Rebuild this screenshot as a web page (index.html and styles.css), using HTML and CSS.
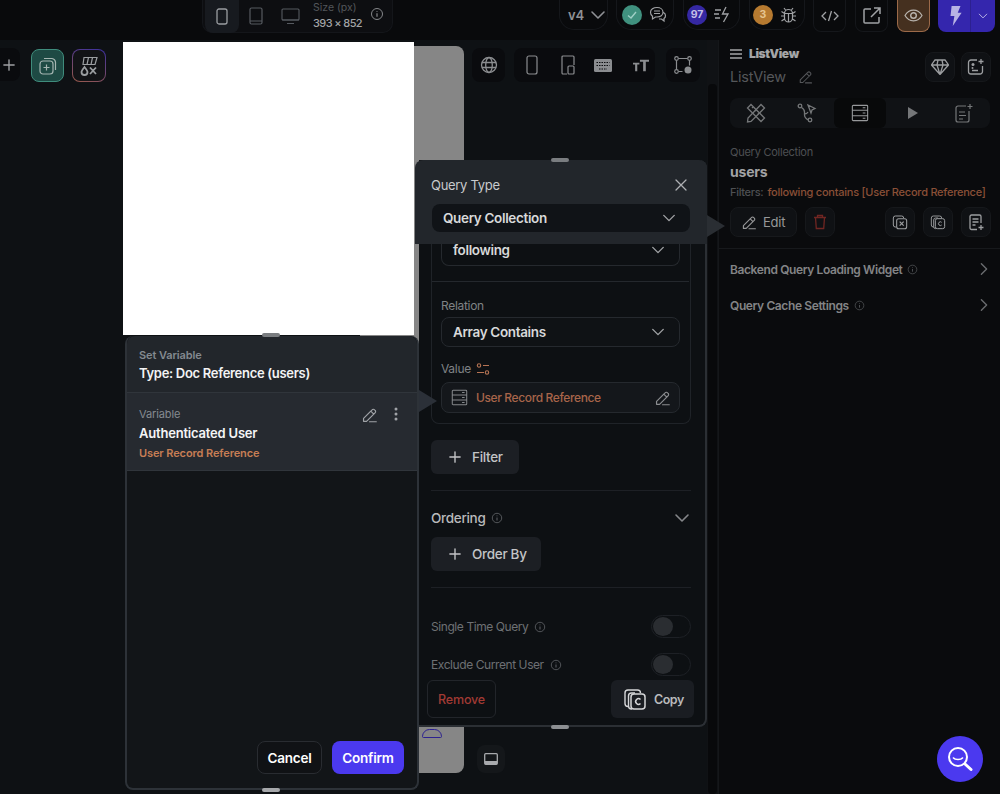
FILE: index.html
```html
<!DOCTYPE html>
<html lang="en">
<head>
<meta charset="utf-8">
<title>ListView Query</title>
<link rel="stylesheet" href="styles.css">
</head>
<body>
<svg class="defs" aria-hidden="true">
  <symbol id="pencil" viewBox="0 0 20 20"><path d="M3 14.500 13 4.500a2 2 0 0 1 3 0l.5.5a2 2 0 0 1 0 3L6.500 18H3v-3.500ZM11.500 6l3.500 3.500M10 18.500h8" fill="none" stroke="currentColor" stroke-width="1.400" stroke-linecap="round" stroke-linejoin="round"/></symbol>
  <symbol id="chev" viewBox="0 0 16 16"><path d="M2 5l6 6 6-6" fill="none" stroke="currentColor" stroke-width="1.600" stroke-linecap="round" stroke-linejoin="round"/></symbol>
  <symbol id="info" viewBox="0 0 14 14"><circle cx="7" cy="7" r="5.500" fill="none" stroke="currentColor"/><path d="M7 6.300v3.500M7 4.200v.8" stroke="currentColor" stroke-width="1.200"/></symbol>
  <symbol id="plus" viewBox="0 0 14 14"><path d="M7 1v12M1 7h12" stroke="currentColor" stroke-width="1.600" stroke-linecap="round"/></symbol>
  <symbol id="db" viewBox="0 0 20 20"><path d="M2.500 1.500h15a1 1 0 0 1 1 1v15a1 1 0 0 1-1 1h-15a1 1 0 0 1-1-1v-15a1 1 0 0 1 1-1ZM1.500 7h17M1.500 13h17M13 4.200h3M13 10h3M13 15.800h3" fill="none" stroke="currentColor" stroke-width="1.200"/></symbol>
  <symbol id="copyc" viewBox="0 0 24 24"><path d="M6 19.500H5a3 3 0 0 1-3-3V6a3 3 0 0 1 3-3h9.500a3 3 0 0 1 3 3M9 22H8.500a3 3 0 0 1-3-3V9a3 3 0 0 1 3-3H12" fill="none" stroke="currentColor" stroke-width="1.400"/><rect x="8" y="7" width="14" height="15" rx="3" fill="none" stroke="currentColor" stroke-width="1.500"/><path d="M17.500 12.500a2.800 2.800 0 1 0 0 4" fill="none" stroke="currentColor" stroke-width="1.500"/></symbol>
</svg>

<header class="topbar">
  <div class="device-group">
    <span class="device active"><svg width="12" height="17" viewBox="0 0 12 17"><rect x="1" y="1" width="10" height="15" rx="2" fill="none" stroke="currentColor" stroke-width="1.300"/></svg></span>
    <span class="device"><svg width="14" height="18" viewBox="0 0 14 18"><rect x="1" y="1" width="12" height="16" rx="1.500" fill="none" stroke="currentColor" stroke-width="1.200"/><path d="M1 14h12" stroke="currentColor"/></svg></span>
    <span class="device"><svg width="19" height="17" viewBox="0 0 19 17"><rect x="1" y="1" width="17" height="11" rx="1" fill="none" stroke="currentColor" stroke-width="1.100"/><path d="M1 12h17M6 15.500h7" stroke="currentColor" stroke-width="1.200"/></svg></span>
    <div class="size-read">
      <span class="size-label">Size (px)</span>
      <span class="size-value">393 × 852</span>
    </div>
    <svg class="size-info" width="14" height="14"><use href="#info"/></svg>
  </div>
  <div class="actions">
    <div class="pill pill-v"><span>v4</span><svg width="16" height="16"><use href="#chev"/></svg></div>
    <div class="pill pill-check">
      <span class="dot dot-teal"><svg width="12" height="12" viewBox="0 0 12 12"><path d="M2 6.500 5 9l5-6" fill="none" stroke="currentColor" stroke-width="1.400"/></svg></span>
      <svg width="18" height="17" viewBox="0 0 18 17"><path d="M8 1.500c3.500 0 6 2 6 4.800s-2.500 4.700-6 4.700H6.500L3.500 13v-2.800C2 9.300 1.500 7.800 1.500 6.300 1.500 3.500 4.500 1.500 8 1.500ZM5 5h6M5 7.500h6M14.500 6.500c1.500.8 2 2 2 3.200 0 1.200-.5 2.200-1.500 2.900v2.400L12.500 13H10" fill="none" stroke="currentColor" stroke-width="1.200"/></svg>
    </div>
    <div class="pill pill-score">
      <span class="dot dot-purple">97</span>
      <svg width="18" height="17" viewBox="0 0 18 17"><path d="M12 1 8.500 8H14l-4.500 8M1 4h6M0 8h5M1 12h5" fill="none" stroke="currentColor" stroke-width="1.300"/></svg>
    </div>
    <div class="pill pill-bugs">
      <span class="dot dot-amber">3</span>
      <svg width="17" height="18" viewBox="0 0 17 18"><path d="M4.500 7.500a4 4 0 0 1 8 0V12a4 4 0 0 1-8 0ZM8.500 7v9M4.500 7.500h8M5.500 4 4 2M11.500 4 13 2M4.500 10H1M12.500 10H16M4.500 13l-3 2M12.500 13l3 2M4.500 7.500l-3-2M12.500 7.500l3-2" fill="none" stroke="currentColor" stroke-width="1.200"/></svg>
    </div>
    <span class="square"><svg width="18" height="12" viewBox="0 0 18 12"><path d="M5 2 1 6l4 4M13 2l4 4-4 4M10.500 1l-3 10" fill="none" stroke="currentColor" stroke-width="1.300"/></svg></span>
    <span class="square square-push"><svg width="18" height="18" viewBox="0 0 18 18"><path d="M8 2H2a1 1 0 0 0-1 1v12a1 1 0 0 0 1 1h13a1 1 0 0 0 1-1V10M8 10l9-9M11 1h6v6" fill="none" stroke="currentColor" stroke-width="1.500"/></svg></span>
    <span class="square square-eye square-push"><svg width="19" height="13" viewBox="0 0 19 13"><path d="M1 6.500C3 3 6 1.200 9.500 1.200S16 3 18 6.500c-2 3.500-5 5.300-8.500 5.300S3 10 1 6.500Z" fill="none" stroke="currentColor" stroke-width="1.200"/><circle cx="9.500" cy="6.500" r="2.800" fill="none" stroke="currentColor" stroke-width="1.400"/></svg></span>
    <div class="run">
      <span class="run-main"><svg width="13" height="20" viewBox="0 0 11 18"><path d="M2 0h8L7.500 6H11L3 18l1.500-9H1Z" fill="currentColor"/></svg></span>
      <span class="run-more"><svg width="10" height="10"><use href="#chev"/></svg></span>
    </div>
  </div>
</header>

<div class="workspace">
  <main class="canvas">
    <div class="float-btn add-btn"><svg width="12" height="12"><use href="#plus"/></svg></div>
    <div class="float-btn teal-btn"><svg width="18" height="18" viewBox="0 0 18 18"><rect x="1" y="4" width="13" height="13" rx="3" fill="none" stroke="currentColor" stroke-width="1.200"/><path d="M5 1.500h8a4 4 0 0 1 3.500 3.500v8M7.500 7.500v6M4.500 10.500h6" fill="none" stroke="currentColor" stroke-width="1.200"/></svg></div>
    <div class="float-btn var-btn"><svg width="18" height="20" viewBox="0 0 18 20"><path d="M4 1.500h13l-2 7H3ZM8.500 1.500l-1.500 7M12.500 1.500 11 8.500" fill="none" stroke="currentColor" stroke-width="1.200"/><path d="M4.500 11c-1.800 2.300-3 3.800-3 5a3 3 0 0 0 6 0c0-1.200-1.200-2.700-3-5ZM10 11.500l6 6.500M16 11.500 10 18" fill="none" stroke="currentColor" stroke-width="1.800"/></svg></div>

    <div class="phone-shell"><span class="notch"></span></div>
    <div class="phone-screen"></div>

    <div class="tool-tile tile-globe"><svg width="18" height="18" viewBox="0 0 18 18"><g fill="none" stroke="currentColor" stroke-width="1.300"><circle cx="9" cy="9" r="7.500"/><ellipse cx="9" cy="9" rx="3.300" ry="7.500"/><path d="M2 6.500h14M2 11.500h14"/></g></svg></div>
    <div class="tool-tile tile-views">
      <svg width="12" height="20" viewBox="0 0 12 20"><rect x="1" y="1" width="10" height="18" rx="2" fill="none" stroke="currentColor" stroke-width="1.200"/></svg>
      <svg class="view-tablet" width="14" height="20" viewBox="0 0 14 20"><path d="M6 19H2a1 1 0 0 1-1-1V2a1 1 0 0 1 1-1h10a1 1 0 0 1 1 1v8" fill="none" stroke="currentColor" stroke-width="1.200"/><rect x="7" y="11" width="6" height="8" rx="1" fill="none" stroke="currentColor" stroke-width="1.200"/></svg>
      <svg class="view-keys" width="18" height="13" viewBox="0 0 18 13"><rect width="18" height="13" rx="1.500" fill="currentColor"/><path d="M2.500 3.500h13M2.500 6.500h13M5 10h8" stroke="#0b0c0f" stroke-width="1.200" stroke-dasharray="1.500 1"/></svg>
      <svg width="16" height="13" viewBox="0 0 15 11"><path d="M0 3h6v1.500H4V11H2V4.500H0ZM6.500 0H15v2h-3v9H9.500V2h-3Z" fill="currentColor"/></svg>
    </div>
    <div class="tool-tile tile-flow"><svg width="18" height="18" viewBox="0 0 18 18"><g fill="none" stroke="currentColor" stroke-width="1.200"><circle cx="2.500" cy="2.500" r="1.800"/><circle cx="15.500" cy="2.500" r="1.800"/><circle cx="2.500" cy="15.500" r="1.800"/><path d="M4.500 2.500h9M2.500 4.500v9M15.500 4.500v5M4.500 15.500h4"/></g><circle cx="14" cy="14" r="3.500" fill="currentColor"/></svg></div>
    <div class="tool-tile tile-dock"><svg width="14" height="12" viewBox="0 0 14 12"><rect x=".7" y=".7" width="12.600" height="10.600" rx="1" fill="none" stroke="currentColor" stroke-width="1.300"/><rect x="1" y="8" width="12" height="3" fill="currentColor"/></svg></div>

    <section class="query-panel">
      <span class="handle handle-top"></span>
      <span class="handle handle-bottom"></span>
      <div class="query-head">
        <span class="pointer pointer-query"></span>
        <div class="query-title">
          <span>Query Type</span>
          <svg width="14" height="14" viewBox="0 0 14 14"><path d="M2 2l10 10M12 2 2 12" stroke="currentColor" stroke-width="1.300" stroke-linecap="round"/></svg>
        </div>
        <div class="select select-dark"><span>Query Collection</span><svg width="14" height="14"><use href="#chev"/></svg></div>
      </div>
      <div class="query-body">
        <div class="filter-card">
          <div class="select select-cut"><span>following</span><svg width="14" height="14"><use href="#chev"/></svg></div>
          <div class="filter-rule"></div>
          <label class="field-label">Relation</label>
          <div class="select select-line"><span>Array Contains</span><svg width="14" height="14"><use href="#chev"/></svg></div>
          <div class="field-label value-label">Value
            <svg width="14" height="14" viewBox="0 0 14 14"><g fill="none" stroke="currentColor" stroke-width="1.100"><circle cx="3" cy="3.500" r="1.700"/><circle cx="11" cy="10.500" r="1.700"/><path d="M7 3.500h6M1 10.500h7"/></g></svg>
          </div>
          <div class="value-field">
            <svg class="value-db" width="17" height="17"><use href="#db"/></svg>
            <span class="value-text">User Record Reference</span>
            <svg class="value-pen" width="17" height="17"><use href="#pencil"/></svg>
          </div>
        </div>
        <button class="ghost filter-btn"><svg width="12" height="12"><use href="#plus"/></svg>Filter</button>
        <div class="rule rule-a"></div>
        <div class="order-row">
          <span class="order-title">Ordering</span>
          <svg class="info-ic" width="12" height="12"><use href="#info"/></svg>
          <svg class="order-chev" width="16" height="16"><use href="#chev"/></svg>
        </div>
        <button class="ghost order-btn"><svg width="12" height="12"><use href="#plus"/></svg>Order By</button>
        <div class="rule rule-b"></div>
        <div class="toggle-row toggle-first"><span>Single Time Query</span><svg class="info-ic" width="12" height="12"><use href="#info"/></svg><span class="toggle"><i></i></span></div>
        <div class="toggle-row toggle-second"><span>Exclude Current User</span><svg class="info-ic" width="12" height="12"><use href="#info"/></svg><span class="toggle"><i></i></span></div>
      </div>
      <div class="query-foot">
        <button class="remove">Remove</button>
        <button class="copy"><svg width="24" height="24"><use href="#copyc"/></svg>Copy</button>
      </div>
    </section>

    <section class="var-panel">
      <span class="handle handle-vtop"></span>
      <span class="handle handle-vbottom"></span>
      <span class="pointer pointer-var"></span>
      <div class="var-head">
        <span class="var-kicker">Set Variable</span>
        <strong class="var-type">Type: Doc Reference (users)</strong>
      </div>
      <div class="var-row">
        <div class="var-row-top">
          <span class="var-small">Variable</span>
          <svg class="var-pen" width="17" height="17"><use href="#pencil"/></svg>
          <svg class="var-dots" width="4" height="14" viewBox="0 0 4 14"><circle cx="2" cy="2" r="1.500" fill="currentColor"/><circle cx="2" cy="7" r="1.500" fill="currentColor"/><circle cx="2" cy="12" r="1.500" fill="currentColor"/></svg>
        </div>
        <strong class="var-name">Authenticated User</strong>
        <span class="var-ref">User Record Reference</span>
      </div>
      <div class="var-spacer"></div>
      <div class="var-foot">
        <button class="cancel">Cancel</button>
        <button class="confirm">Confirm</button>
      </div>
    </section>
  </main>

  <div class="gutter"><span class="thumb"></span></div>

  <aside class="props">
    <div class="props-head">
      <div class="props-names">
        <div class="props-crumb"><svg width="12" height="10" viewBox="0 0 12 10"><path d="M0 1h12M0 5h12M0 9h12" stroke="currentColor" stroke-width="1.500"/></svg><strong>ListView</strong></div>
        <div class="props-name"><span>ListView</span><svg width="15" height="15"><use href="#pencil"/></svg></div>
      </div>
      <span class="p-square"><svg width="18" height="16" viewBox="0 0 18 16"><path d="M4 1h10l3.500 5L9 15.500.5 6ZM.5 6h17M6 6l3 9.500L12 6M6 6l1-5M12 6l-1-5" fill="none" stroke="currentColor" stroke-width="1.300"/></svg></span>
      <span class="p-square"><svg width="18" height="18" viewBox="0 0 18 18"><path d="M10 2H4a2.500 2.500 0 0 0-2.500 2.500v9A2.500 2.500 0 0 0 4 16h9a2.500 2.500 0 0 0 2.500-2.500V8M14 1v5M11.500 3.500h5M5 12.500h6" fill="none" stroke="currentColor" stroke-width="1.300"/><circle cx="6" cy="6.500" r="1.500" fill="currentColor"/><circle cx="5.500" cy="10" r="1" fill="currentColor"/></svg></span>
    </div>
    <nav class="tabs">
      <span class="tab"><svg width="20" height="20" viewBox="0 0 20 20"><g fill="none" stroke="currentColor" stroke-width="1.300"><path d="M5 1.500 18.500 15l-3.500 3.500L1.500 5ZM6 5l1.500-1.500M9 8l1.500-1.500M12 11l1.500-1.500"/><path d="M15 1.500 18.500 5 5 18.500l-3.500.5.500-4Z"/></g></svg></span>
      <span class="tab"><svg width="20" height="20" viewBox="0 0 20 20"><g fill="none" stroke="currentColor" stroke-width="1.300"><circle cx="3" cy="3" r="1.800"/><circle cx="13" cy="17" r="1.800"/><path d="M4.500 4.500C7 6 7.500 7 7.500 9v3c0 2 2 4 4 5M7.500 11c2 0 3-1 3.500-2M11 2l7 3.500-3 1.500-1 3Z"/></g></svg></span>
      <span class="tab tab-active"><svg width="18" height="18"><use href="#db"/></svg></span>
      <span class="tab"><svg width="10" height="12" viewBox="0 0 10 12"><path d="M0 0l10 6-10 6Z" fill="currentColor"/></svg></span>
      <span class="tab"><svg width="18" height="20" viewBox="0 0 18 20"><path d="M11 3H3a2 2 0 0 0-2 2v12a2 2 0 0 0 2 2h9a2 2 0 0 0 2-2V8M15 1v5M12.500 3.500h5M4 9h6M4 12.500h7M4 16h4" fill="none" stroke="currentColor" stroke-width="1.200"/></svg></span>
    </nav>
    <div class="query-summary">
      <span class="sum-label">Query Collection</span>
      <strong class="sum-name">users</strong>
      <div class="sum-filter"><span>Filters:</span><em>following contains [User Record Reference]</em></div>
    </div>
    <div class="sum-actions">
      <button class="edit"><svg width="16" height="16"><use href="#pencil"/></svg>Edit</button>
      <span class="p-square small trash"><svg width="14" height="16" viewBox="0 0 14 16"><path d="M1 3.500h12M4.500 3.500V1.500h5v2M2.500 3.500l.8 11h7.400l.8-11" fill="none" stroke="currentColor" stroke-width="1.300"/></svg></span>
      <span class="sum-spring"></span>
      <span class="p-square small"><svg width="16" height="16" viewBox="0 0 24 24"><path d="M6 19.500H5a3 3 0 0 1-3-3V6a3 3 0 0 1 3-3h9.500a3 3 0 0 1 3 3" fill="none" stroke="currentColor" stroke-width="1.500"/><rect x="7" y="7" width="15" height="15" rx="3" fill="none" stroke="currentColor" stroke-width="1.600"/><path d="m11.500 11.500 6 6M17.500 11.500l-6 6" stroke="currentColor" stroke-width="1.800"/></svg></span>
      <span class="p-square small"><svg width="16" height="16"><use href="#copyc"/></svg></span>
      <span class="p-square small"><svg width="15" height="17" viewBox="0 0 15 17"><path d="M8 15.500H2.500a1.500 1.500 0 0 1-1.500-1.500V2.500A1.500 1.500 0 0 1 2.500 1h8A1.500 1.500 0 0 1 12 2.500V9M3.500 5h6M3.500 8h6M3.500 11h3M12 11v5M9.500 13.500h5" fill="none" stroke="currentColor" stroke-width="1.300"/></svg></span>
    </div>
    <div class="props-rule"></div>
    <div class="prop-row"><span>Backend Query Loading Widget</span><svg width="11" height="11"><use href="#info"/></svg><svg class="prop-chev" width="14" height="14"><use href="#chev"/></svg></div>
    <div class="prop-row"><span>Query Cache Settings</span><svg width="11" height="11"><use href="#info"/></svg><svg class="prop-chev" width="14" height="14"><use href="#chev"/></svg></div>
  </aside>
</div>

<button class="search-fab" aria-label="Search"><svg width="28" height="28" viewBox="0 0 28 28"><g fill="none" stroke="#fff" stroke-linecap="round"><circle cx="12" cy="12" r="9" stroke-width="2"/><path d="M7.500 13c1.500 2 7.500 2 9 0" stroke-width="1.600"/><path d="m19 19 6 5.500" stroke-width="3"/></g></svg></button>
</body>
</html>
```

FILE: styles.css
```css
* { box-sizing: border-box; }
html, body { margin: 0; height: 100%; }
body {
  width: 1000px;
  height: 794px;
  overflow: hidden;
  position: relative;
  background: #0e1114;
  color: #fff;
  font-family: "Inter", "Liberation Sans", sans-serif;
  font-size: 13px;
  letter-spacing: -0.2px;
}
button { font: inherit; letter-spacing: inherit; border: 0; padding: 0; color: inherit; background: none; }
svg { display: block; flex: none; }
.defs { position: absolute; width: 0; height: 0; }

/* top bar */
.topbar {
  height: 40px;
  display: flex;
  align-items: flex-start;
  padding: 0 5px 0 202px;
  background: #090a0c;
}
.device-group {
  width: 191px;
  height: 33px;
  display: flex;
  align-items: center;
  padding-left: 2px;
  background: #0d0e11;
  border: 1px solid #14161a;
  border-top: 0;
  border-radius: 0 0 10px 10px;
  color: #565a60;
}
.device { width: 34px; height: 33px; display: flex; align-items: center; justify-content: center; }
.device.active { background: #171a1f; border-radius: 0 0 8px 8px; color: #9a9da1; }
.size-read { display: flex; flex-direction: column; margin-left: 6px; width: 57px; }
.size-label { font-size: 10.500px; line-height: 14px; color: #53565a; letter-spacing: 0; }
.size-value { font-size: 11px; line-height: 17px; font-weight: 500; color: #a2a4a6; letter-spacing: -0.6px; white-space: nowrap; }
.size-info { color: #85878a; margin-top: -4px; }
.actions { margin-left: auto; display: flex; gap: 8px; color: #a0a2a5; }
.pill {
  height: 30px;
  width: 57px;
  padding: 0 3px;
  gap: 7px;
  display: flex;
  align-items: center;
  border: 1px solid #15171b;
  border-top: 0;
  border-radius: 0 0 15px 15px;
}
.pill-v { width: 49px; gap: 6px; padding-left: 8px; font-size: 13px; font-weight: 600; color: #8f9195; }
.pill-check { width: 58px; padding-left: 5px; }
.pill-score { margin-left: 1px; }
.pill-bugs { width: 56px; margin-left: 1px; }
.dot {
  width: 20px;
  height: 20px;
  border-radius: 50%;
  display: flex;
  align-items: center;
  justify-content: center;
  font-size: 10.500px;
  font-weight: 700;
  letter-spacing: 0;
}
.dot-teal { background: #40917f; color: #9fd0c6; }
.dot-purple { background: #3528a3; color: #c3bfe6; }
.dot-amber { background: #b67a30; color: #e6c490; }
.square {
  width: 33px;
  height: 32px;
  display: flex;
  align-items: center;
  justify-content: center;
  border: 1px solid #15171b;
  border-top: 0;
  border-radius: 0 0 8px 8px;
}
.square-push { margin-left: 1px; }
.square-eye { background: #45301f; border: 1px solid #9c6a49; border-top: 0; color: #b9b4ae; }
.run { width: 57px; height: 32px; display: flex; background: #3426ad; border-radius: 0 0 8px 8px; color: #b8b3e4; }
.run-main { width: 33px; padding-left: 3px; display: flex; align-items: center; justify-content: center; border-right: 1px solid #2c2090; }
.run-more { flex: 1; display: flex; align-items: center; justify-content: center; }

/* workspace */
.workspace { display: grid; grid-template-columns: 707px 11px 282px; height: 754px; }
.canvas { position: relative; z-index: 2; background: #0e1114; }
.float-btn { position: absolute; display: flex; align-items: center; justify-content: center; color: #9ea0a3; }
.add-btn { left: -8px; top: 8px; width: 28px; height: 33px; background: #0a0b0e; border-radius: 8px; padding-left: 6px; }
.teal-btn { left: 31px; top: 9px; width: 33px; height: 33px; background: #1e4a44; border: 1.500px solid #3f8c7c; border-radius: 8px; color: #a5b5b1; }
.var-btn {
  left: 72px; top: 9px; width: 34px; height: 33px; border-radius: 8px;
  border: 1.500px solid transparent;
  background: linear-gradient(#121316, #121316) padding-box, linear-gradient(200deg, #3a2fa0, #9a5a4a) border-box;
  color: #9b9ea1;
}
.phone-shell {
  position: absolute; left: 360px; top: 6px; width: 104px; height: 727px;
  background: #868686; border-radius: 8px;
}
.notch {
  position: absolute; left: 62px; top: 683px; width: 20px; height: 9px;
  border: 1.500px solid #2c2190; border-radius: 10px 10px 2px 2px;
}
.phone-screen { position: absolute; left: 123px; top: 2px; width: 291px; height: 293px; background: #fff; }
.tool-tile {
  position: absolute; display: flex; align-items: center; justify-content: center;
  background: #0a0b0e; border-radius: 8px; color: #8b8d90;
}
.tile-globe { left: 472px; top: 8px; width: 33px; height: 34px; }
.tile-views { left: 514px; top: 8px; width: 141px; height: 34px; justify-content: flex-start; gap: 21px; padding-left: 12px; }
.view-tablet { margin-left: 2px; }
.view-keys { margin-left: -2px; }
.tile-flow { left: 666px; top: 8px; width: 34px; height: 34px; }
.tile-dock { left: 477px; top: 705px; width: 28px; height: 28px; color: #a8aaad; background: #14171a; }

/* query panel */
.query-panel {
  position: absolute; left: 419px; top: 120px; width: 288px; height: 567px;
  display: flex; flex-direction: column;
  background: #0d1013;
  border: 2px solid #2b2f34;
  border-top: 0; border-left: 0;
  border-radius: 0 8px 8px 0;
}
.handle { position: absolute; width: 18px; height: 4px; border-radius: 2px; background: #7a7d80; z-index: 3; }
.handle-top { left: 132px; top: -2px; }
.handle-bottom { left: 132px; bottom: -4px; background: #8c8f92; }
.query-head {
  position: relative;
  margin-left: -4px; margin-right: -2px;
  width: 292px; height: 84px; flex: none;
  background: #22262b;
  padding: 16px 17px 0 16px;
  border-radius: 8px 8px 0 0;
}
.pointer { position: absolute; width: 0; height: 0; border-style: solid; border-color: transparent; }
.pointer-query { right: -18px; top: 55px; border-width: 11px 0 11px 18px; border-left-color: #2a2e33; }
.query-title { display: flex; justify-content: space-between; align-items: center; height: 18px; font-size: 13px; letter-spacing: -0.3px; color: #c8cacc; padding-right: 2px; }
.query-title svg { color: #aeb0b3; }
.select { display: flex; align-items: center; justify-content: space-between; font-weight: 600; font-size: 13.500px; color: #d8d9da; letter-spacing: -0.35px; }
.select svg { color: #a0a2a5; }
.select-dark { height: 28px; margin: 10px 0 0 1px; padding: 0 14px 0 11px; background: #101317; border-radius: 8px; }
.query-body { flex: 1; padding: 0 0 0 12px; min-height: 0; }
.filter-card {
  width: 260px; height: 180px;
  padding: 0 10px 0 9px;
  border: 1px solid #1f2328; border-top: 0;
  border-radius: 0 0 8px 8px;
}
.select-cut { height: 22px; padding: 0 14px 0 11px; border: 1px solid #25292e; border-top: 0; border-radius: 0 0 8px 8px; }
.select-cut span { margin-top: -10px; }
.select-cut svg { margin-top: -10px; }
.filter-rule { height: 1px; margin: 15px -9px 0 -9px; background: #24282d; }
.field-label { display: block; margin-top: 16px; font-size: 12px; line-height: 15px; color: #7f8285; letter-spacing: -0.3px; }
.select-line { height: 30px; margin-top: 4px; padding: 0 14px 0 11px; border: 1px solid #25292e; border-radius: 8px; background: #0f1215; }
.value-label { display: flex; align-items: center; gap: 5px; margin-top: 14px; }
.value-label svg { color: #b57353; }
.value-field {
  display: flex; align-items: center; height: 31px; margin-top: 6px; padding: 0 8px 0 9px;
  border: 1px solid #25292e; border-radius: 8px; background: #14171b;
}
.value-db { color: #85888b; }
.value-text { margin-left: 8px; flex: 1; font-weight: 500; font-size: 12px; color: #a8654a; letter-spacing: -0.38px; }
.value-pen { color: #8b8d90; }
.ghost {
  display: flex; align-items: center; height: 34px; background: #1c1f24; border-radius: 6px;
  font-size: 13.500px; font-weight: 500; color: #c3c4c6; padding-left: 18px; gap: 11px; letter-spacing: -0.3px;
}
.filter-btn { width: 88px; margin: 16px 0 0; }
.rule { height: 1px; background: #1d2025; width: 260px; }
.rule-a { margin-top: 16px; }
.order-row { display: flex; align-items: center; gap: 6px; height: 20px; margin: 17px 0 0; width: 260px; color: #5f6266; }
.order-title { font-size: 13.500px; font-weight: 500; color: #b9babc; letter-spacing: -0.3px; }
.order-chev { margin-left: auto; color: #85878a; margin-right: 1px; }
.order-btn { width: 110px; margin: 9px 0 0; }
.rule-b { margin-top: 16px; }
.toggle-row { display: flex; align-items: center; gap: 6px; width: 260px; height: 23px; font-size: 12px; color: #6d7074; letter-spacing: -0.42px; }
.toggle-row .info-ic { color: #5c5f63; }
.toggle-first { margin-top: 27px; }
.toggle-second { margin-top: 15px; }
.toggle { margin-left: auto; width: 40px; height: 23px; border: 1px solid #1d2025; border-radius: 12px; padding: 1px; }
.toggle i { display: block; width: 20px; height: 19px; border-radius: 50%; background: #2a2d31; }
.query-foot {
  position: absolute; left: 8px; right: 11px; bottom: 7px;
  display: flex; justify-content: space-between; align-items: stretch; height: 38px;
}
.remove { width: 69px; border: 1px solid #22252a; border-radius: 6px; font-weight: 500; font-size: 12.500px; color: #a13a33; }
.copy { display: flex; align-items: center; gap: 7px; width: 83px; padding-left: 12px; background: #1a1d22; border-radius: 6px; font-weight: 600; font-size: 12.500px; letter-spacing: -0.5px; color: #b9babc; }
.copy svg { color: #d5d6d8; }

/* set variable */
.var-panel {
  position: absolute; left: 125px; top: 296px; width: 294px; height: 454px;
  display: flex; flex-direction: column;
  background: #121518;
  border: 2px solid #2d3238;
  border-top: 0;
  border-radius: 8px;
}
.handle-vtop { left: 135px; top: -3px; }
.handle-vbottom { left: 135px; bottom: -4px; background: #a6a8ab; }
.pointer-var { right: -20px; top: 54px; border-width: 11px 0 11px 18px; border-left-color: #2b3038; }
.var-head { height: 56px; padding: 12px 12px 0; background: #22262b; display: flex; flex-direction: column; border-radius: 8px 8px 0 0; }
.var-kicker { font-size: 11px; line-height: 14px; font-weight: 600; color: #848a90; letter-spacing: -0.1px; }
.var-type { font-size: 13px; line-height: 18px; font-weight: 600; margin-top: 2px; color: #f3f3f4; letter-spacing: -0.3px; }
.var-row { height: 79px; padding: 13px 12px 0; background: #262a30; border-top: 1px solid #30353b; border-bottom: 1px solid #30353b; display: flex; flex-direction: column; }
.var-row-top { display: flex; align-items: center; height: 16px; }
.var-small { font-size: 11px; color: #858a90; letter-spacing: -0.1px; flex: 1; }
.var-pen { color: #a0a3a7; }
.var-dots { color: #a0a3a7; margin: 0 7px 0 16px; }
.var-name { font-size: 13px; line-height: 18px; font-weight: 600; margin-top: 2px; color: #f5f5f6; letter-spacing: -0.2px; }
.var-ref { font-size: 11px; line-height: 14px; font-weight: 600; margin-top: 4px; color: #c77e55; letter-spacing: -0.1px; }
.var-spacer { flex: 1; }
.var-foot { display: flex; justify-content: flex-end; gap: 10px; padding: 0 13px 14px 0; }
.cancel, .confirm { height: 33px; border-radius: 8px; font-size: 13.500px; font-weight: 600; }
.cancel { width: 65px; background: #101215; border: 1px solid #292c31; }
.confirm { width: 72px; background: #4b39ef; }

/* gutter + properties */
.gutter { background: #101215; position: relative; }
.thumb { position: absolute; left: 1px; top: 44px; bottom: 0; width: 9px; background: #08090b; border-radius: 4px; }
.props { background: #0a0b0d; padding: 0 9px 0 11px; color: #9a9b9d; border-left: 1px solid #15171a; }
.props-head { display: flex; gap: 6px; padding-top: 12px; height: 45px; }
.props-names { flex: 1; margin-top: -6px; }
.props-crumb { display: flex; align-items: center; gap: 7px; height: 13px; margin-top: 1px; color: #a4a5a7; font-size: 12px; font-weight: 600; letter-spacing: -0.4px; }
.props-name { display: flex; align-items: center; gap: 12px; margin-top: 8px; font-size: 14.500px; color: #55575a; letter-spacing: -0.2px; }
.p-square {
  width: 30px; height: 30px; display: flex; align-items: center; justify-content: center;
  background: #0f1114; border: 1px solid #16181b; border-radius: 8px; color: #9c9ea0;
}
.tabs { display: flex; height: 30px; margin-top: 13px; width: 260px; background: #101215; border-radius: 8px; }
.tab { flex: 1; display: flex; align-items: center; justify-content: center; color: #757779; }
.tab-active { background: #08090a; border-radius: 6px; color: #97999b; margin: 0 2px; }
.query-summary { display: flex; flex-direction: column; margin-top: 17px; }
.sum-label { font-size: 11px; line-height: 14px; color: #4e5053; letter-spacing: -0.25px; }
.sum-name { font-size: 14px; line-height: 18px; font-weight: 700; margin-top: 4px; color: #a2a3a5; }
.sum-filter { display: flex; gap: 4px; margin-top: 4px; font-size: 11px; line-height: 15px; white-space: nowrap; font-weight: 500; }
.sum-filter span { color: #4e5053; letter-spacing: -0.3px; }
.sum-filter em { font-style: normal; color: #8a5037; letter-spacing: -0.24px; }
.sum-actions { display: flex; align-items: center; gap: 8px; margin-top: 7px; }
.edit {
  display: flex; align-items: center; gap: 6px; width: 67px; height: 30px; padding-left: 10px;
  background: #0f1114; border: 1px solid #17191c; border-radius: 8px; font-size: 13px; color: #979899;
}
.trash { color: #702622; }
.sum-spring { flex: 1; }
.props-rule { height: 1px; background: #17191c; margin: 11px -9px 0 -11px; }
.prop-row { display: flex; align-items: center; gap: 5px; height: 36px; font-size: 12px; font-weight: 600; color: #838486; letter-spacing: -0.39px; }
.props-rule + .prop-row { margin-top: 2px; }
.prop-row svg { color: #4f5154; }
.prop-row .prop-chev { margin-left: auto; transform: rotate(-90deg); color: #6a6c6f; }

.search-fab {
  position: absolute; left: 937px; top: 736px; width: 46px; height: 46px;
  border-radius: 50%; background: #4b39ef;
  display: flex; align-items: center; justify-content: center;
}
```
